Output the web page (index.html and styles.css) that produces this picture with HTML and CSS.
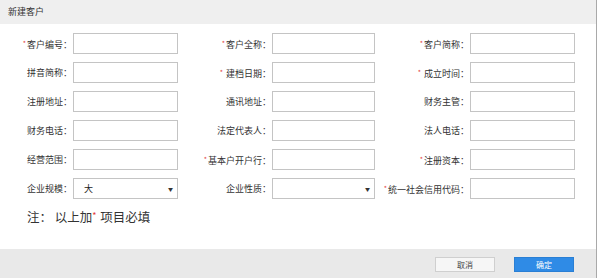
FILE: index.html
```html
<!DOCTYPE html>
<html lang="zh">
<head>
<meta charset="utf-8">
<title>新建客户</title>
<link rel="stylesheet" href="styles.css">
</head>
<body>
<div class="dialog">
  <div class="dialog-head">新建客户</div>
  <div class="dialog-body">
    <div class="form-grid">
      <label class="lbl"><span class="req">*</span>客户编号：</label><div class="field"></div>
      <label class="lbl"><span class="req">*</span>客户全称：</label><div class="field"></div>
      <label class="lbl"><span class="req">*</span>客户简称：</label><div class="field"></div>

      <label class="lbl">拼音简称：</label><div class="field"></div>
      <label class="lbl"><span class="req">*</span> 建档日期：</label><div class="field"></div>
      <label class="lbl"><span class="req">*</span> 成立时间：</label><div class="field"></div>

      <label class="lbl">注册地址：</label><div class="field"></div>
      <label class="lbl">通讯地址：</label><div class="field"></div>
      <label class="lbl">财务主管：</label><div class="field"></div>

      <label class="lbl">财务电话：</label><div class="field"></div>
      <label class="lbl">法定代表人：</label><div class="field"></div>
      <label class="lbl">法人电话：</label><div class="field"></div>

      <label class="lbl">经营范围：</label><div class="field"></div>
      <label class="lbl"><span class="req">*</span>基本户开户行：</label><div class="field"></div>
      <label class="lbl"><span class="req">*</span>注册资本：</label><div class="field"></div>

      <label class="lbl">企业规模：</label><div class="field select"><span class="val">大</span><span class="arrow">▼</span></div>
      <label class="lbl">企业性质：</label><div class="field select"><span class="val"></span><span class="arrow">▼</span></div>
      <label class="lbl"><span class="req">*</span>统一社会信用代码：</label><div class="field"></div>
    </div>
    <p class="note">注： 以上加<span class="req">*</span> 项目必填</p>
  </div>
  <div class="dialog-foot">
    <button class="btn btn-cancel">取消</button>
    <button class="btn btn-ok">确定</button>
  </div>
</div>
</body>
</html>
```

FILE: styles.css
```css
html, body {
  margin: 0;
  padding: 0;
  background: #ffffff;
}
body {
  width: 600px;
  height: 278px;
  overflow: hidden;
  font-family: "Noto Sans CJK SC", "Noto Sans", sans-serif;
  color: #333;
}
.dialog {
  width: 596px;
  height: 278px;
  border-right: 1px solid #a9a9a9;
  display: flex;
  flex-direction: column;
  background: #fff;
}
.dialog-head {
  height: 24px;
  line-height: 24px;
  padding-left: 8px;
  font-size: 9px;
  color: #333;
  background: #efefef;
}
.dialog-body {
  flex: 1;
  padding-top: 9px;
}
.form-grid {
  display: grid;
  grid-template-columns: 65px 105px 94px 103px 95px 105px;
  grid-auto-rows: 21px;
  row-gap: 8px;
  padding-left: 8px;
}
.lbl {
  font-size: 9px;
  line-height: 21px;
  text-align: right;
  padding-right: 1px;
  white-space: nowrap;
  color: #333;
}
.req {
  color: #e23b3b;
  font-size: 7px;
  vertical-align: 2px;
  margin-right: 1px;
}
.field {
  border: 1px solid #c4c4c4;
  background: #fff;
  box-sizing: border-box;
  height: 21px;
}
.select {
  display: flex;
  align-items: center;
  justify-content: space-between;
  padding: 0 4px 0 10px;
  font-size: 9px;
  color: #222;
}
.arrow {
  font-size: 5px;
  color: #333;
}
.note {
  margin: 9px 0 0 27px;
  font-size: 12.5px;
  line-height: 16px;
  color: #333;
}
.note .req {
  font-size: 9px;
  vertical-align: 3px;
  margin: 0 1px 0 0;
}
.dialog-foot {
  height: 29px;
  background: #e9e9e9;
  display: flex;
  justify-content: flex-end;
  align-items: center;
  gap: 19px;
  padding-right: 22px;
  padding-top: 1px;
  box-sizing: border-box;
}
.btn {
  width: 60px;
  height: 15px;
  padding: 0;
  font-family: inherit;
  font-size: 8px;
  line-height: 13px;
  box-sizing: border-box;
  cursor: pointer;
}
.btn-cancel {
  background: #f6f6f6;
  border: 1px solid #cfcfcf;
  color: #444;
}
.btn-ok {
  background: #2f8be6;
  border: 1px solid #2a7fd4;
  color: #fff;
}
```
